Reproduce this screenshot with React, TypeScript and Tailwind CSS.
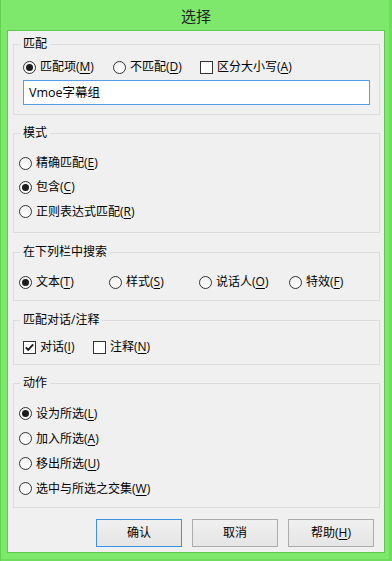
import type { ReactNode } from 'react';

const Radio = ({ checked = false }: { checked?: boolean }) => (
  <span className="flex h-[13px] w-[13px] shrink-0 items-center justify-center rounded-full border border-[#333] bg-gradient-to-b from-[#f2f2f2] to-white">
    {checked && <span className="h-[7px] w-[7px] rounded-full bg-[#1c1c1c]" />}
  </span>
);

const Check = ({ checked = false }: { checked?: boolean }) => (
  <span className="flex h-[13px] w-[13px] shrink-0 items-center justify-center border border-[#333] bg-white">
    {checked && (
      <svg className="h-[11px] w-[11px]" viewBox="0 0 11 11" fill="none">
        <path d="M1.8 5.4 L4.2 7.9 L9.2 2.4" stroke="#1c1c1c" strokeWidth={1.9} />
      </svg>
    )}
  </span>
);

// label text with the access key underlined, like 匹配项(M)
const Key = ({ text, k }: { text: string; k: string }) => (
  <span>
    {text}(<span className="underline underline-offset-2">{k}</span>)
  </span>
);

const Option = ({ control, text, k, className = '' }: { control: ReactNode; text: string; k: string; className?: string }) => (
  <label className={`flex items-center ${className}`}>
    {control}
    <span className="ml-[4px] whitespace-nowrap">
      <Key text={text} k={k} />
    </span>
  </label>
);

const Group = ({ title, className, children }: { title: string; className: string; children: ReactNode }) => (
  <div className={`relative ml-[5px] w-[367px] border border-[#dcdcdc] ${className}`}>
    <span className="absolute -top-[9px] left-[6px] bg-[#f0f0f0] px-[3px] leading-[16px]">{title}</span>
    {children}
  </div>
);

const Button = ({ children, primary = false }: { children: ReactNode; primary?: boolean }) => (
  <button
    className={`flex h-[28px] w-[86px] items-center justify-center border bg-gradient-to-b from-[#f0f0f0] to-[#e5e5e5] ${
      primary ? 'border-[#3c93e6]' : 'border-[#acacac]'
    }`}
  >
    {children}
  </button>
);

export default function App() {
  return (
    <div className="h-[561px] w-[392px] bg-[#7ee86c] font-['Open_Sans','Noto_Sans_CJK_SC',sans-serif] text-[12px] leading-[16px] text-black shadow-[inset_1px_0_0_#62d151,inset_-3px_0_0_#70dc5e,inset_0_-2px_0_#70dc5e]">
      {/* title bar */}
      <div className="flex h-[30px] items-center justify-center pt-[2px] text-[15px] text-[#222]">选择</div>

      {/* client area */}
      <div className="mx-[7px] h-[523px] border border-[#5dc94d] bg-[#f0f0f0]">
        <Group title="匹配" className="mt-[13px] h-[71px]">
          <div className="flex h-[16px] items-center pl-[9px] pt-0 mt-[14px]">
            <Option className="w-[90px]" control={<Radio checked />} text="匹配项" k="M" />
            <Option className="w-[87px]" control={<Radio />} text="不匹配" k="D" />
            <Option control={<Check />} text="区分大小写" k="A" />
          </div>
          <div className="mx-[9px] mt-[5px] flex h-[25px] items-center border border-[#569de5] bg-white pl-[5px] text-[12.5px]">
            Vmoe字幕组
          </div>
        </Group>

        <Group title="模式" className="mt-[18px] h-[100px]">
          <div className="flex flex-col pl-[5px] pt-[17px]">
            <Option className="h-[24px]" control={<Radio />} text="精确匹配" k="E" />
            <Option className="h-[24px]" control={<Radio checked />} text="包含" k="C" />
            <Option className="h-[25px]" control={<Radio />} text="正则表达式匹配" k="R" />
          </div>
        </Group>

        <Group title="在下列栏中搜索" className="mt-[19px] h-[49px]">
          <div className="flex h-[16px] items-center pl-[5px] mt-[21px]">
            <Option className="w-[90px]" control={<Radio checked />} text="文本" k="T" />
            <Option className="w-[90px]" control={<Radio />} text="样式" k="S" />
            <Option className="w-[90px]" control={<Radio />} text="说话人" k="O" />
            <Option control={<Radio />} text="特效" k="F" />
          </div>
        </Group>

        <Group title="匹配对话/注释" className="mt-[19px] h-[45px]">
          <div className="flex h-[16px] items-center pl-[9px] mt-[18px]">
            <Option className="w-[70px]" control={<Check checked />} text="对话" k="I" />
            <Option control={<Check />} text="注释" k="N" />
          </div>
        </Group>

        <Group title="动作" className="mt-[18px] h-[125px]">
          <div className="flex flex-col pl-[5px] pt-[17px]">
            <Option className="h-[25px]" control={<Radio checked />} text="设为所选" k="L" />
            <Option className="h-[25px]" control={<Radio />} text="加入所选" k="A" />
            <Option className="h-[25px]" control={<Radio />} text="移出所选" k="U" />
            <Option className="h-[25px]" control={<Radio />} text="选中与所选之交集" k="W" />
          </div>
        </Group>

        <div className="mt-[11px] flex justify-end gap-[10px] pr-[10px]">
          <Button primary>确认</Button>
          <Button>取消</Button>
          <Button>
            <Key text="帮助" k="H" />
          </Button>
        </div>
      </div>
    </div>
  );
}
